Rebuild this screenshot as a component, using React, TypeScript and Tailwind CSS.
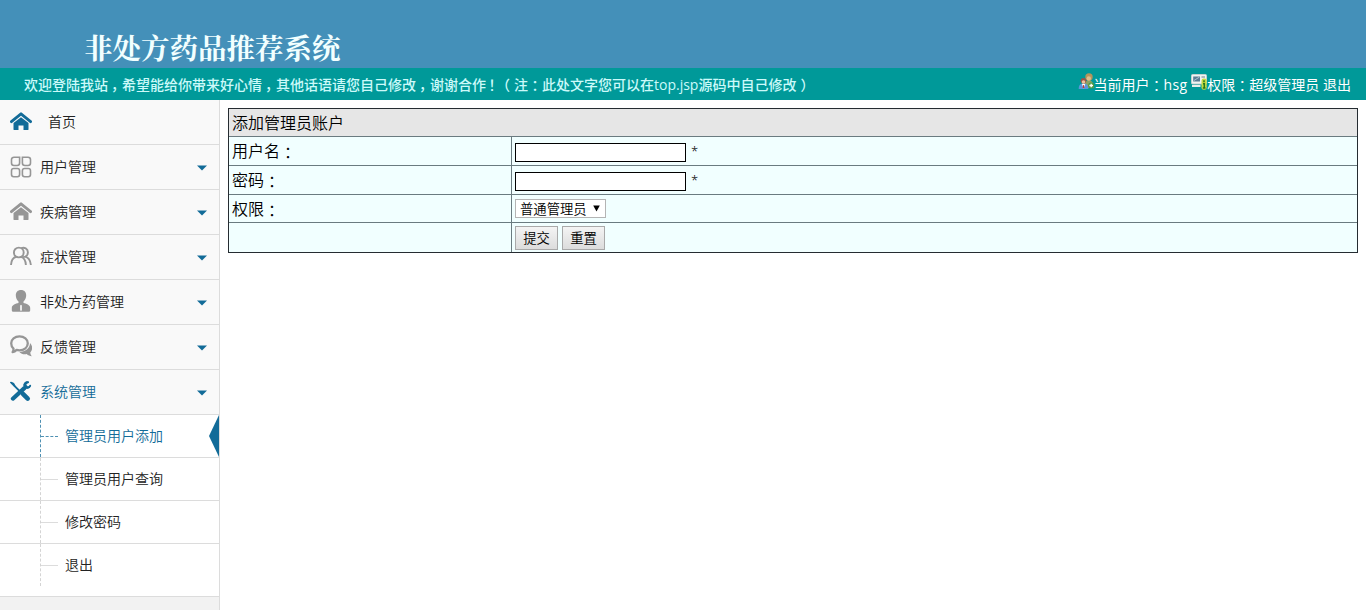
import type { ReactNode } from 'react';

const ui = "font-['Open_Sans','Noto_Sans_CJK_SC',sans-serif]";

/* Full-width punctuation, kept to one em and set towards the centre of its box */
function Colon() {
  return <span className="inline-block translate-y-px font-['Noto_Sans_CJK_TC',sans-serif] leading-none">：</span>;
}

function Comma() {
  return <span className="mr-1 ml-[3px] [font-feature-settings:'halt']">，</span>;
}

function HomeIcon() {
  return (
    <svg className="-mt-0.5" width="22" height="20" viewBox="0 0 22 20" fill="currentColor">
      <path d="M1.400 10.700 11 2.800l9.600 7.900" fill="none" stroke="currentColor" strokeWidth="2.800" strokeLinecap="round" strokeLinejoin="round" />
      <path d="M3.500 12 11 6.300l7.500 5.700v6.200c0 .6-.3.900-.9.900h-4.100v-4.600h-5v4.600H4.400c-.6 0-.9-.3-.9-.9z" />
    </svg>
  );
}

function GridIcon() {
  return (
    <svg width="22" height="22" viewBox="0 0 22 22" fill="none" stroke="currentColor" strokeWidth="1.600">
      <path d="M4 1.200h5.600V7A2.500 2.500 0 0 1 7.100 9.500H4A2.500 2.500 0 0 1 1.500 7V3.700A2.500 2.500 0 0 1 4 1.200z" />
      <path d="M12.400 1.200H18a2.500 2.500 0 0 1 2.500 2.500V7A2.500 2.500 0 0 1 18 9.500h-3.100A2.500 2.500 0 0 1 12.400 7z" />
      <rect x="1.500" y="12.500" width="8.100" height="8.200" rx="2.200" />
      <rect x="12.400" y="12.500" width="8.100" height="8.200" rx="2.200" />
    </svg>
  );
}

function UsersIcon() {
  return (
    <svg className="-mt-0.5" width="22" height="20" viewBox="0 0 22 20" fill="none" stroke="currentColor" strokeWidth="1.900">
      <circle cx="8.800" cy="6.500" r="4.900" />
      <path d="M11.200 2.400c2.900-1.700 6.900.4 6.700 4.100-.1 1.900-1.100 3.500-2.500 4.200 3 .9 5 3.900 5.500 8.300M1 19c.2-4.500 2.300-7.600 5.500-8.300M11 10.900c3 .8 4.600 3.800 4.900 8.100M12.800 11c.7.2 1.500.1 2.600-.3" />
    </svg>
  );
}

function PersonIcon() {
  return (
    <svg className="-mt-0.5" width="20" height="22" viewBox="0 0 20 22" fill="currentColor">
      <path d="M10 0c3.300 0 5.200 2.200 5.200 5.300 0 2.500-1 4.800-2.700 6.100v1.700c2.600.7 6.700 1.700 6.700 4.900v2.200c0 1-.8 1.600-1.800 1.600H2.600c-1 0-1.800-.6-1.800-1.600V18c0-3.200 4.100-4.200 6.700-4.900v-1.700C5.800 10.100 4.800 7.800 4.800 5.300 4.800 2.200 6.700 0 10 0z" />
      <path d="m9.200 15.500.8-.7.8.7v4.700l-.8.8-.8-.8z" fill="#fff" />
    </svg>
  );
}

function ChatIcon() {
  return (
    <svg className="-mt-0.5" width="22" height="22" viewBox="0 0 22 22" fill="currentColor">
      <path d="M9.500 1.400c4.700 0 8.300 2.900 8.300 6.900s-3.600 7-8.300 7c-1 0-2-.1-2.900-.4-1.200 1.200-2.400 1.900-4 2.200.7-1 1-2.100.9-3.400-1.500-1.300-2.300-3.300-2.300-5.400 0-4 3.600-6.900 8.300-6.900z" fill="none" stroke="currentColor" strokeWidth="2.300" strokeLinejoin="round" />
      <path d="M20 8c3 2.900 2.600 7.200.3 9.400 0 1.400.6 2.600 1.600 3.900-2-.1-3.900-.9-5.200-2.200-2.800.5-5.600-.1-7.300-2.100C15 17 20 13.500 20 8z" />
    </svg>
  );
}

function ToolsIcon() {
  return (
    <svg className="-mt-0.5" width="23" height="22" viewBox="0 0 23 22" fill="none" stroke="currentColor" strokeLinecap="round">
      <path d="m2 3 8.800 8.800" strokeWidth="1.900" />
      <path d="M.9 2.100 3.600 3.300 4.800 5.700" strokeWidth="1.700" />
      <path d="m13.500 13.900 5 5" strokeWidth="4.800" />
      <path d="M3 19 15 8" strokeWidth="4.300" />
      <path d="M19.700 1.500c-3.200-1.400-6.600 1.500-5.400 4.800 1.300 3.500 6.900 2.900 7.500-1.300l-3.100 1.300-1.700-1.800z" fill="currentColor" stroke="none" />
      <path d="M18.900 1.900c-2.300-.5-4.200 1.500-3.600 3.700.8 2.700 5 2.700 5.800-.1" strokeWidth="2" />
    </svg>
  );
}

function AccountIcon() {
  return (
    <svg width="17" height="17" viewBox="0 0 16 17">
      <path d="M6 15c-.5-5 1-7.500 4.200-7.500 3.400 0 5.300 2.500 5 7.500z" fill="#8aa364" />
      <circle cx="10.500" cy="4" r="3.700" fill="#b5945c" />
      <circle cx="10.300" cy="5.500" r="2.200" fill="#dfbd8c" />
      <path d="M.2 16c0-3.800 1.500-5.500 4.800-5.500s4.800 1.700 4.800 5.500z" fill="#5b97dc" />
      <path d="m3.400 10.800 1.700 4.600 1.700-4.600z" fill="#fff" />
      <path d="m4.600 12-.4 3h1.700l-.5-3z" fill="#c63a35" />
      <circle cx="5" cy="7.800" r="2.800" fill="#9a5548" />
      <circle cx="5" cy="9" r="1.800" fill="#edc29c" />
      <circle cx="12.700" cy="12.500" r="3" fill="#4d9b42" />
      <path d="M12.700 10.700v3.600M10.900 12.500h3.600" stroke="#fff" strokeWidth="1.300" />
    </svg>
  );
}

function RoleIcon() {
  return (
    <svg width="16" height="17" viewBox="0 0 16 17">
      <rect x=".5" y="1.500" width="15" height="9.500" rx="1" fill="#f0f4f2" stroke="#c3d0d0" />
      <rect x="2.200" y="3.500" width="6.800" height="5" fill="#5b7d94" />
      <path d="M3 7.500 8.500 4" stroke="#a8c2cf" />
      <path d="M10.500 4h3.500" stroke="#71818a" />
      <path d="M1 13h8.500" stroke="#e8eeea" strokeWidth="2" />
      <rect x="10.500" y="5.500" width="5.200" height="11.300" rx="2.200" fill="#c5dc43" />
      <path d="M13 7.300v1.900M12 10.800h1.300v4M11.800 15.100h2.700" stroke="#26751e" strokeWidth="1.500" fill="none" />
    </svg>
  );
}

const items: { label: string; icon: ReactNode; active?: boolean }[] = [
  { label: '用户管理', icon: <GridIcon /> },
  { label: '疾病管理', icon: <HomeIcon /> },
  { label: '症状管理', icon: <UsersIcon /> },
  { label: '非处方药管理', icon: <PersonIcon /> },
  { label: '反馈管理', icon: <ChatIcon /> },
  { label: '系统管理', icon: <ToolsIcon />, active: true },
];

const subItems = ['管理员用户添加', '管理员用户查询', '修改密码', '退出'];

function Sidebar() {
  return (
    <nav className="flex w-[220px] shrink-0 flex-col border-r border-[#dcdcdc] bg-[#f2f2f2] text-sm font-[350] text-[#222]">
      <a className="flex h-[45px] items-center border-b border-[#dcdcdc] bg-[#f9f9f9] pl-2.5">
        <span className="flex w-[38px] text-[#126b98]"><HomeIcon /></span>
        <span>首页</span>
      </a>
      {items.map((it) => (
        <a
          key={it.label}
          className={`flex h-[45px] items-center border-b border-[#dcdcdc] bg-[#f9f9f9] pr-3 pl-2.5 ${it.active ? 'text-[#126b98]' : ''}`}
        >
          <span className={`flex w-[22px] shrink-0 justify-center ${it.active ? '' : 'text-[#969696]'}`}>{it.icon}</span>
          <span className="ml-2">{it.label}</span>
          <svg className="mt-px ml-auto text-[#126b98]" width="10" height="6" viewBox="0 0 10 6" fill="currentColor">
            <path d="M0 .5h10L5 5.500z" />
          </svg>
        </a>
      ))}
      <div className="border-b border-[#dcdcdc] bg-white">
        {subItems.map((label, i) => (
          <a
            key={label}
            className={`flex items-stretch border-[#dcdcdc] ${i < 3 ? 'h-[43px] border-b' : 'h-[52px] pb-2.5'} ${i === 0 ? 'text-[#126b98]' : ''}`}
          >
            <span className={`ml-10 flex w-[18px] items-center border-l border-dashed ${i === 0 ? 'border-[#4f91b3]' : 'border-[#d4d4d4]'}`}>
              <span className={`w-full border-t ${i === 0 ? 'border-dashed border-[#4f91b3]' : 'border-[#dcdcdc]'}`} />
            </span>
            <span className="ml-[7px] self-center">{label}</span>
            {i === 0 && (
              <svg className="ml-auto" width="10" height="42" viewBox="0 0 10 42" fill="#126b98">
                <path d="M10 0v42L0 21z" />
              </svg>
            )}
          </a>
        ))}
      </div>
    </nav>
  );
}

function AdminForm() {
  const label = 'w-[283px] shrink-0 border-r border-[#6a7b80] pl-[3px] flex items-center';
  const field = 'flex flex-1 items-center pl-[3px]';
  const star = "ml-[5px] font-['Noto_Sans',sans-serif] text-[13px]";
  const button =
    'flex h-6 w-[43px] items-center justify-center border border-[#a9a9a9] bg-linear-to-b from-[#f4f4f4] to-[#dcdcdc] pt-0.5 text-[13.333px] leading-none text-black';
  return (
    <form className="mt-2 ml-2 flex h-[145px] w-[1130px] flex-col border border-[#252c31] bg-[#f1ffff] text-base leading-none font-[350] text-black">
      <div className="flex h-7 items-center border-b border-[#6a7b80] bg-[#e6e6e6] pt-px pl-[3px]">添加管理员账户</div>
      <div className="flex h-[29px] border-b border-[#6a7b80]">
        <div className={label}>用户名<Colon /></div>
        <div className={field}>
          <input type="text" className="mt-0.5 h-[19px] w-[171px] border border-black bg-white px-1 text-xs" />
          <span className={star}>*</span>
        </div>
      </div>
      <div className="flex h-[29px] border-b border-[#6a7b80]">
        <div className={label}>密码<Colon /></div>
        <div className={field}>
          <input type="password" className="mt-0.5 h-[19px] w-[171px] border border-black bg-white px-1 text-xs" />
          <span className={star}>*</span>
        </div>
      </div>
      <div className="flex h-7 border-b border-[#6a7b80]">
        <div className={label}>权限<Colon /></div>
        <div className={field}>
          <div className="flex h-[19px] w-[91px] items-center border border-[#b4b4b4] bg-white pl-1 text-[13.333px]">
            <span className="pt-[3px]">普通管理员</span>
            <svg className="ml-[6px]" width="7" height="7" viewBox="0 0 7 7">
              <path d="M.2.500h6.600L3.500 6.500z" />
            </svg>
          </div>
        </div>
      </div>
      <div className="flex flex-1">
        <div className={label} />
        <div className={`${field} gap-1`}>
          <button type="button" className={button}>提交</button>
          <button type="button" className={button}>重置</button>
        </div>
      </div>
    </form>
  );
}

export default function App() {
  return (
    <div className={`flex h-[610px] w-[1366px] flex-col overflow-hidden bg-white ${ui}`}>
      <header className="h-[68px] bg-[#4490b9] pt-7 pl-[84px] font-['Noto_Serif_CJK_SC','Noto_Sans_CJK_SC',serif] text-[28.500px] leading-[38px] font-bold text-[#f2ffff]">
        非处方药品推荐系统
      </header>
      <div className="flex h-8 items-center justify-between bg-[#009999] pr-[15px] pl-6 text-sm leading-none whitespace-nowrap text-white">
        <div className="font-medium text-[#ccfafa]">
          欢迎登陆我站<Comma />希望能给你带来好心情<Comma />其他话语请您自己修改<Comma />谢谢合作
          <span className="mr-px -ml-px font-['Noto_Sans_CJK_TC',sans-serif]">！</span>
          <span className="mr-1 -ml-1">（</span>注<Colon />此处文字您可以在top.jsp源码中自己修改
          <span className="ml-1">）</span>
        </div>
        <div className="flex items-center">
          <span className="mb-1.5"><AccountIcon /></span>
          <span className="-ml-px">当前用户<Colon /><span className="tracking-[0.3px]">hsg</span></span>
          <span className="mb-1.5 ml-1"><RoleIcon /></span>
          <span>权限<Colon />超级管理员 退出</span>
        </div>
      </div>
      <div className="flex min-h-0 flex-1">
        <Sidebar />
        <main className="flex-1">
          <AdminForm />
        </main>
      </div>
    </div>
  );
}
